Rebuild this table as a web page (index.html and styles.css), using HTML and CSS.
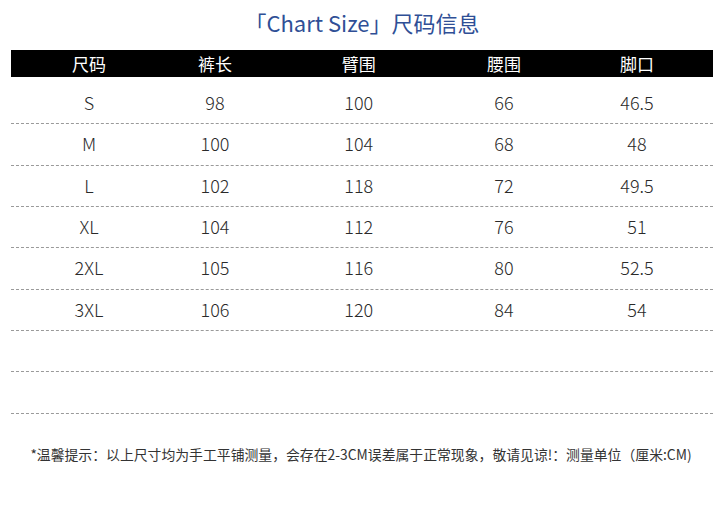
FILE: index.html
```html
<!DOCTYPE html>
<html lang="zh-CN">
<head>
<meta charset="utf-8">
<title>Chart Size</title>
<link rel="stylesheet" href="styles.css">
</head>
<body>
<div class="page">
  <h1 class="title">「Chart Size」尺码信息</h1>
  <div class="table">
    <div class="row head">
      <div class="cell">尺码</div><div class="cell">裤长</div><div class="cell">臂围</div><div class="cell">腰围</div><div class="cell">脚口</div>
    </div>
    <div class="body">
      <div class="row"><div class="cell">S</div><div class="cell">98</div><div class="cell">100</div><div class="cell">66</div><div class="cell">46.5</div></div>
      <div class="row"><div class="cell">M</div><div class="cell">100</div><div class="cell">104</div><div class="cell">68</div><div class="cell">48</div></div>
      <div class="row"><div class="cell">L</div><div class="cell">102</div><div class="cell">118</div><div class="cell">72</div><div class="cell">49.5</div></div>
      <div class="row"><div class="cell">XL</div><div class="cell">104</div><div class="cell">112</div><div class="cell">76</div><div class="cell">51</div></div>
      <div class="row"><div class="cell">2XL</div><div class="cell">105</div><div class="cell">116</div><div class="cell">80</div><div class="cell">52.5</div></div>
      <div class="row"><div class="cell">3XL</div><div class="cell">106</div><div class="cell">120</div><div class="cell">84</div><div class="cell">54</div></div>
      <div class="row"><div class="cell"></div><div class="cell"></div><div class="cell"></div><div class="cell"></div><div class="cell"></div></div>
      <div class="row"><div class="cell"></div><div class="cell"></div><div class="cell"></div><div class="cell"></div><div class="cell"></div></div>
    </div>
  </div>
  <p class="note">*温馨提示：以上尺寸均为手工平铺测量，会存在2-3CM误差属于正常现象，敬请见谅!：测量单位（厘米:CM)</p>
</div>
</body>
</html>
```

FILE: styles.css
```css
* { box-sizing: border-box; }
html, body { margin: 0; padding: 0; background: #fff; }
body {
  font-family: "Noto Sans CJK SC", "Noto Sans", sans-serif;
  color: #222;
}
.page {
  width: 722px;
  height: 507px;
  padding: 0 9px 0 11px;
  display: flex;
  flex-direction: column;
}
.title {
  margin: 0;
  height: 50px;
  padding-top: 6px;
  font-size: 22px;
  font-weight: 400;
  line-height: 32px;
  text-align: center;
  color: #2f4f96;
}
.table { width: 702px; }
.row {
  display: grid;
  grid-template-columns: 141px 134.5px 144.5px 139.5px 142.5px;
  align-items: center;
}
.cell { text-align: center; }
.cell:nth-child(1) { padding-left: 15px; }
.cell:nth-child(2) { padding-right: 8.5px; }
.cell:nth-child(4) { padding-left: 6.5px; }
.cell:nth-child(5) { padding-right: 9.5px; }
.head {
  height: 27px;
  background: #000;
  color: #fff;
  font-size: 17px;
  line-height: 27px;
}
.body { padding-top: 6px; }
.body .row {
  height: 41.33px;
  border-bottom: 1px dashed #9a9a9a;
  font-size: 18px;
  font-weight: 300;
  color: #2a2a2a;
  line-height: 24px;
  padding-bottom: 2px;
}
.note {
  margin: 30px 0 0;
  font-size: 13.85px;
  line-height: 20px;
  color: #333;
  text-align: center;
  padding-right: 2px;
}
```
